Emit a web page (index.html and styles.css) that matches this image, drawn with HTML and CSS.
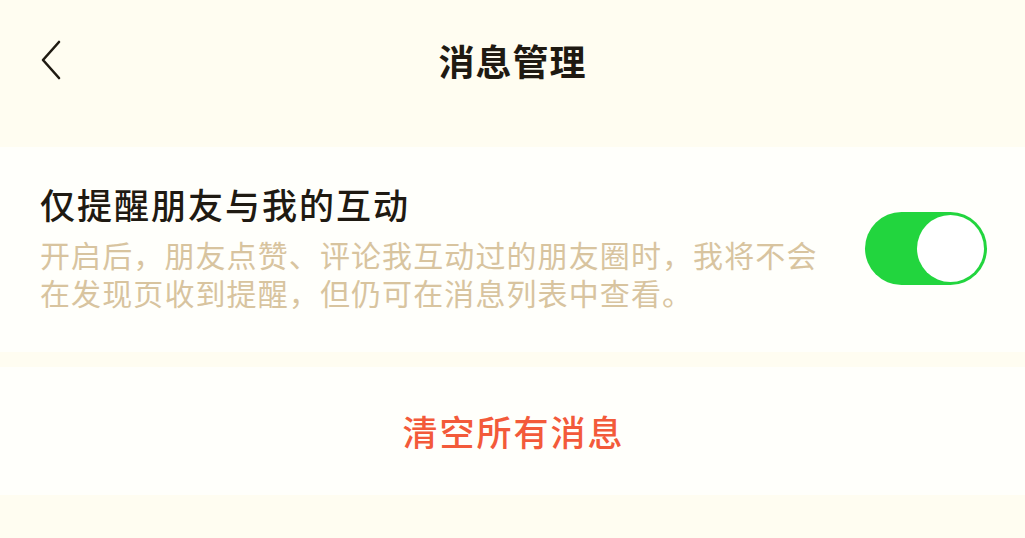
FILE: index.html
```html
<!DOCTYPE html>
<html lang="zh-CN">
<head>
<meta charset="utf-8">
<title>消息管理</title>
<link rel="stylesheet" href="styles.css">
</head>
<body>
<div class="page">
  <header class="topbar">
    <button class="back" aria-label="返回">
      <svg width="22" height="40" viewBox="0 0 22 40"><path d="M19 2 L3 20 L19 38" fill="none" stroke="#1f1a12" stroke-width="2.6" stroke-linecap="round" stroke-linejoin="round"/></svg>
    </button>
    <h1 class="title">消息管理</h1>
    <span class="spacer"></span>
  </header>

  <section class="card setting">
    <div class="setting-text">
      <div class="setting-title">仅提醒朋友与我的互动</div>
      <div class="setting-desc">开启后，朋友点赞、评论我互动过的朋友圈时，我将不会在发现页收到提醒，但仍可在消息列表中查看。</div>
    </div>
    <div class="switch on"><span class="knob"></span></div>
  </section>

  <section class="card action">
    <span class="danger">清空所有消息</span>
  </section>
</div>
</body>
</html>
```

FILE: styles.css
```css
html, body {
  margin: 0;
  padding: 0;
}
body {
  background: #fffdf1;
  font-family: "Noto Sans CJK SC", "Noto Sans", sans-serif;
  color: #1f1a12;
  width: 1025px;
  height: 538px;
  overflow: hidden;
}
.page {
  display: flex;
  flex-direction: column;
}
.topbar {
  height: 120px;
  display: flex;
  align-items: center;
  padding: 0 40px;
  margin-bottom: 27px;
}
.back {
  width: 60px;
  height: 40px;
  padding: 0;
  border: 0;
  background: none;
  display: flex;
  align-items: center;
  justify-content: flex-start;
}
.spacer {
  width: 60px;
}
.title {
  flex: 1;
  margin: 0;
  text-align: center;
  font-size: 36px;
  font-weight: 700;
  letter-spacing: 1px;
  line-height: 46px;
  color: #1f1a12;
}
.card {
  background: #fffffb;
}
.setting {
  height: 205px;
  box-sizing: border-box;
  padding: 34px 38px 0 40px;
  display: flex;
  align-items: flex-start;
  justify-content: space-between;
}
.setting-text {
  width: 805px;
}
.setting-title {
  font-size: 35px;
  font-weight: 500;
  letter-spacing: 2px;
  line-height: 46px;
  color: #1f1a12;
}
.setting-desc {
  margin-top: 8px;
  font-size: 30px;
  letter-spacing: 1.1px;
  line-height: 38px;
  color: #d8c49f;
}
.switch {
  margin-top: 31px;
  width: 122px;
  height: 73px;
  box-sizing: border-box;
  border-radius: 37px;
  background: #22d53e;
  padding: 3px;
  display: flex;
  justify-content: flex-end;
  align-items: center;
}
.knob {
  width: 67px;
  height: 67px;
  border-radius: 50%;
  background: #ffffff;
}
.action {
  margin-top: 15px;
  height: 128px;
  display: flex;
  align-items: center;
  justify-content: center;
}
.danger {
  font-size: 35px;
  font-weight: 500;
  letter-spacing: 2px;
  line-height: 46px;
  color: #f35a3a;
  padding-left: 2px;
}
```
